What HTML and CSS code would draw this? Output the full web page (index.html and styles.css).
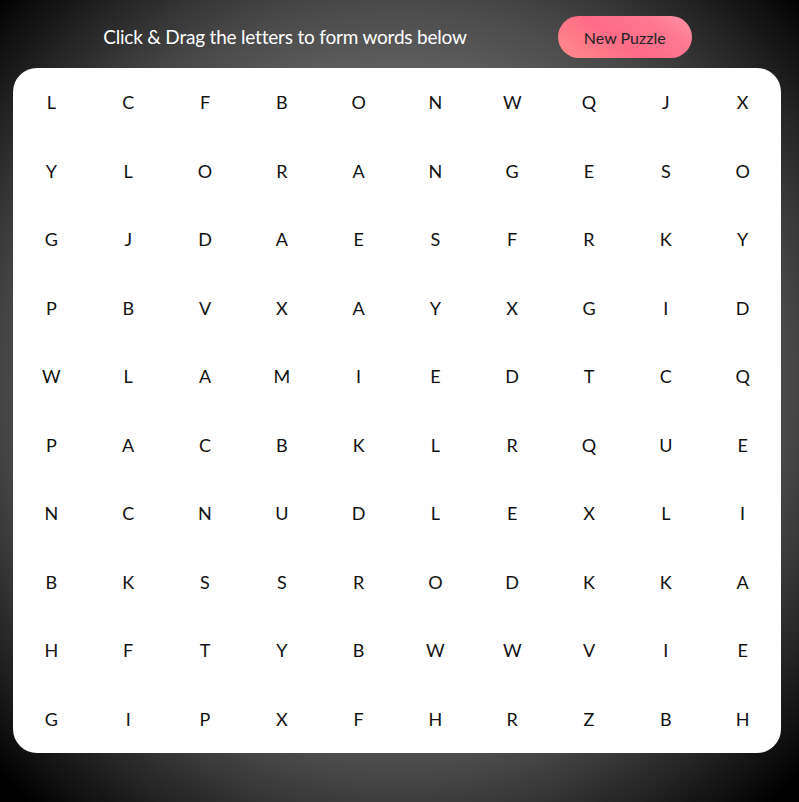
FILE: index.html
```html
<!DOCTYPE html>
<html lang="en">
<head>
<meta charset="utf-8">
<title>Word Search</title>
<link rel="stylesheet" href="styles.css">
</head>
<body>
<header class="top">
  <h1 class="title">Click &amp; Drag the letters to form words below</h1>
  <button class="new-btn">New Puzzle</button>
</header>
<main class="board">
  <span>L</span><span>C</span><span>F</span><span>B</span><span>O</span><span>N</span><span>W</span><span>Q</span><span>J</span><span>X</span>
  <span>Y</span><span>L</span><span>O</span><span>R</span><span>A</span><span>N</span><span>G</span><span>E</span><span>S</span><span>O</span>
  <span>G</span><span>J</span><span>D</span><span>A</span><span>E</span><span>S</span><span>F</span><span>R</span><span>K</span><span>Y</span>
  <span>P</span><span>B</span><span>V</span><span>X</span><span>A</span><span>Y</span><span>X</span><span>G</span><span>I</span><span>D</span>
  <span>W</span><span>L</span><span>A</span><span>M</span><span>I</span><span>E</span><span>D</span><span>T</span><span>C</span><span>Q</span>
  <span>P</span><span>A</span><span>C</span><span>B</span><span>K</span><span>L</span><span>R</span><span>Q</span><span>U</span><span>E</span>
  <span>N</span><span>C</span><span>N</span><span>U</span><span>D</span><span>L</span><span>E</span><span>X</span><span>L</span><span>I</span>
  <span>B</span><span>K</span><span>S</span><span>S</span><span>R</span><span>O</span><span>D</span><span>K</span><span>K</span><span>A</span>
  <span>H</span><span>F</span><span>T</span><span>Y</span><span>B</span><span>W</span><span>W</span><span>V</span><span>I</span><span>E</span>
  <span>G</span><span>I</span><span>P</span><span>X</span><span>F</span><span>H</span><span>R</span><span>Z</span><span>B</span><span>H</span>
</main>
</body>
</html>
```

FILE: styles.css
```css
html, body {
  margin: 0;
  padding: 0;
}
body {
  width: 799px;
  height: 802px;
  overflow: hidden;
  font-family: "Lato", "Noto Sans", sans-serif;
  background: radial-gradient(circle at 50% 48%, #bdbdbd 0, #5a5a5a 330px, #444 400px, #000 560px);
}
.top {
  height: 68px;
  display: flex;
  align-items: center;
  justify-content: center;
  gap: 91px;
  padding: 16px 4px 10px 0;
  box-sizing: border-box;
}
.title {
  margin: 0;
  font-size: 19px;
  line-height: 24px;
  font-weight: 400;
  color: #fff;
  letter-spacing: -0.2px;
}
.new-btn {
  width: 134px;
  height: 42px;
  flex: none;
  border: none;
  border-radius: 21px;
  font-family: inherit;
  font-size: 16px;
  color: #222;
  background: linear-gradient(35deg, #ff8c8c 0%, #ff6b86 45%, #ff7890 75%, #ff93a8 100%);
}
.board {
  margin-left: 13px;
  width: 768px;
  height: 685px;
  background: #fff;
  border-radius: 24px;
  display: grid;
  grid-template-columns: repeat(10, 1fr);
  grid-template-rows: repeat(10, 1fr);
}
.board span {
  display: flex;
  align-items: center;
  justify-content: center;
  font-size: 18px;
  color: #111;
}
```
